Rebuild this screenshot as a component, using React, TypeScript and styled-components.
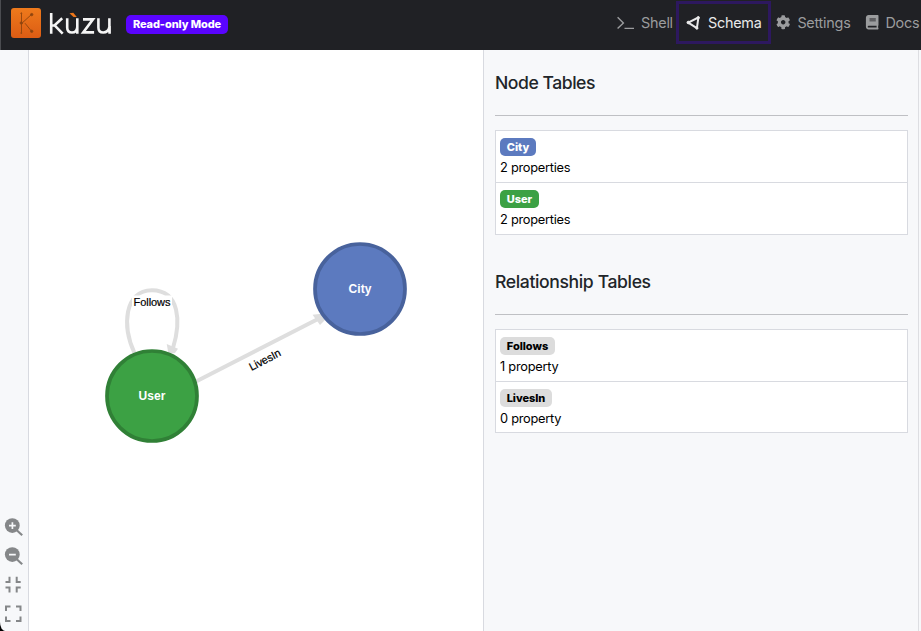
import React from "react";
import styled, { createGlobalStyle } from "styled-components";
import { FaBook, FaCog } from "react-icons/fa";

const GlobalStyle = createGlobalStyle`
  *, *::before, *::after { box-sizing: border-box; }
  body { margin: 0; font-family: Inter, "Liberation Sans", sans-serif; background: #000; overflow: hidden; }
`;

const Page = styled.div`
  display: grid;
  grid-template-rows: 50px 1fr;
  width: 921px;
  height: 631px;
  overflow: hidden;
  border-bottom-left-radius: 5px 9px;
  background: #f7f8fa;
`;

const NavBar = styled.header`
  display: flex;
  align-items: flex-start;
  background: #202125;
  border-left: 1px solid #4b4c50;
  padding-left: 10px;
`;

const Logo = styled.svg`
  display: block;
  width: 104px;
  height: 50px;
  flex: none;
`;

const ModeBadge = styled.span`
  width: 102px;
  height: 19px;
  margin: 15px 0 0 11px;
  border-radius: 5px;
  background: #5a04ff;
  color: #fff;
  font-size: 11px;
  font-weight: 800;
  line-height: 19px;
  letter-spacing: -0.1px;
  text-align: center;
  white-space: nowrap;
`;

const Nav = styled.nav`
  display: flex;
  height: 45px;
  margin-left: auto;
  white-space: nowrap;
`;

const NavItem = styled.a<{ $active?: boolean; $width: number; $gap: number; $inset: number }>`
  display: flex;
  align-items: center;
  flex: none;
  gap: ${(p) => p.$gap}px;
  width: ${(p) => p.$width}px;
  margin-top: 1px;
  height: 43px;
  padding: 0 0 0 ${(p) => p.$inset}px;
  border: ${(p) => (p.$active ? "3px solid #2d185f" : "0")};
  color: ${(p) => (p.$active ? "#e9e9ea" : "#9b9c9e")};
  font-size: 14.4px;
  letter-spacing: -0.25px;
  svg { flex: none; }
`;

const Workspace = styled.main`
  display: grid;
  grid-template-columns: 29px 454px 436px 2px;
  min-height: 0;
`;

const ToolRail = styled.aside`
  display: flex;
  flex-direction: column;
  justify-content: flex-end;
  gap: 9px;
  padding: 0 0 7px 3px;
  border-right: 1px solid #d8dae0;
`;

const ToolIcon = styled.svg`
  display: block;
  width: 20px;
  height: 20px;
`;

const Canvas = styled.svg`
  display: block;
  width: 454px;
  height: 581px;
  background: #fff;
  font-family: "Liberation Sans", Arial, sans-serif;
`;

const Sidebar = styled.aside`
  padding: 0 10px 0 11px;
  border-left: 1px solid #d8dae0;
  border-right: 1px solid #dddee2;
`;

const Section = styled.section`
  height: 199px;
`;

const SectionTitle = styled.h2<{ $tracking: number }>`
  height: 66px;
  margin: 0;
  padding-top: 22px;
  border-bottom: 1px solid #bfc0c4;
  color: #212529;
  font-size: 17.6px;
  font-weight: 500;
  line-height: 22px;
  letter-spacing: ${(p) => p.$tracking}px;
`;

const TableList = styled.ul`
  margin: 14px 0 0;
  padding: 0;
  list-style: none;
  border: 1px solid #d8dae0;
  background: #fff;
`;

const TableItem = styled.li`
  height: 51px;
  padding: 7px 4px 0;
  &:not(:last-child) { height: 52px; border-bottom: 1px solid #d8dae0; }
  ${Section}:last-child &:last-child { height: 50px; }
`;

const Tag = styled.span<{ $bg: string; $fg: string; $width: number }>`
  display: block;
  width: ${(p) => p.$width}px;
  height: 18px;
  border-radius: 5px;
  background: ${(p) => p.$bg};
  color: ${(p) => p.$fg};
  font-size: 11px;
  font-weight: 800;
  line-height: 18px;
  letter-spacing: -0.05px;
  text-align: center;
`;

const Count = styled.span`
  display: block;
  margin-top: 4px;
  color: #000;
  font-size: 12.8px;
  line-height: 16px;
  letter-spacing: -0.25px;
`;

const KuzuLogo = () => (
  <Logo viewBox="11 0 104 50">
    <defs>
      <linearGradient id="tile" x1="0" y1="0" x2="0" y2="1">
        <stop offset="0" stopColor="#ee7a1c" />
        <stop offset="1" stopColor="#dc5c14" />
      </linearGradient>
    </defs>
    <rect x="11" y="8" width="30" height="30" rx="3" fill="url(#tile)" />
    <g stroke="#97490f" strokeWidth="1" fill="#8b420f">
      <path d="M21.5 14v18.5M22.5 22.7l8.5-7.8M25 23.2l6.5 8" fill="none" />
      <circle cx="21.3" cy="13.3" r=".5" />
      <circle cx="21.3" cy="23" r="1.2" />
      <circle cx="21.3" cy="33" r=".5" />
      <circle cx="31.7" cy="14.6" r="1.2" />
      <circle cx="31.7" cy="31.3" r="1.2" />
    </g>
    <g fill="none" stroke="#f5f5f5" strokeWidth="2.6">
      <path d="M51.2 13v20.7M62.2 18.3l-7.6 7 8.1 8.4M55 25.5h-3.5" />
      <path d="M67.2 18.2v9.2q0 5.1 4.8 5.1t5.3-5.4v-8.9M77.3 26v7.7" />
      <path d="M83 19.4h10l-9.8 13h10.9" />
      <path d="M98.4 18.2v9.2q0 5.1 4.9 5.1t6.1-5.4v-8.9M109.6 26v7.7" />
    </g>
    <path d="M69.5 13.2l3.8-.5 3.5 4.2h-3.3z" fill="#ed7619" />
  </Logo>
);

const ShellIcon = () => (
  <svg width="17" height="16" viewBox="0 0 17 16" fill="none" stroke="currentColor" strokeWidth="1.4">
    <path d="M.6 2.2l5.8 5.7L.6 13.6M7.5 13.4H17" />
  </svg>
);

const SchemaIcon = () => (
  <svg width="15" height="16" viewBox="0 0 15 16" stroke="currentColor" fill="currentColor">
    <path d="M2.2 7.6L12.4 2.5 10.9 13.2z" fill="none" strokeWidth="2" strokeLinejoin="round" />
    <circle cx="2.3" cy="7.5" r="1.3" />
    <circle cx="12.3" cy="2.7" r="1.1" />
    <circle cx="10.9" cy="13.1" r="1.1" />
  </svg>
);

const ZoomIcon = ({ plus = false }: { plus?: boolean }) => (
  <ToolIcon viewBox="0 0 20 20">
    <circle cx="9.3" cy="8.6" r="7.4" fill="#858789" />
    <path d="M13.5 13l5.7 5.2" stroke="#858789" strokeWidth="2.2" />
    <path d={plus ? "M6 8.6h6.8M9.4 5.2V12" : "M6 8.6h6.8"} stroke="#f7f8fa" strokeWidth="1.7" />
  </ToolIcon>
);

const ScaleIcon = ({ d }: { d: string }) => (
  <ToolIcon viewBox="0 0 20 20" fill="none" stroke="#858789" strokeWidth="2">
    <path d={d} />
  </ToolIcon>
);

type TableInfo = { name: string; bg: string; fg: string; width: number; count: string };

const nodeTables: TableInfo[] = [
  { name: "City", bg: "#5c7abf", fg: "#fff", width: 36, count: "2 properties" },
  { name: "User", bg: "#3ca144", fg: "#fff", width: 39, count: "2 properties" },
];

const relTables: TableInfo[] = [
  { name: "Follows", bg: "#dcdcdc", fg: "#000", width: 55, count: "1 property" },
  { name: "LivesIn", bg: "#dcdcdc", fg: "#000", width: 52, count: "0 property" },
];

type SectionProps = { title: string; tracking: number; tables: TableInfo[] };

const TableSection = ({ title, tracking, tables }: SectionProps) => (
  <Section>
    <SectionTitle $tracking={tracking}>{title}</SectionTitle>
    <TableList>
      {tables.map((t) => (
        <TableItem key={t.name}>
          <Tag $bg={t.bg} $fg={t.fg} $width={t.width}>{t.name}</Tag>
          <Count>{t.count}</Count>
        </TableItem>
      ))}
    </TableList>
  </Section>
);

const SchemaGraph = () => (
  <Canvas viewBox="29 50 454 581">
    <g fill="none" stroke="#dedede" strokeWidth="4">
      <path d="M196 381.5L317 319.5" />
      <path d="M134.5 353C122 326 124 290.5 152 290.2C180 290.5 181 322 173 348" />
    </g>
    <path d="M312.5 314.7L321.5 313.8 325 320 320 325z" fill="#dedede" />
    <path d="M166.7 344L178 348.7 175 353 168.5 354z" fill="#dedede" />
    <rect x="132" y="295.5" width="40" height="14" fill="#fff" />
    <circle cx="360" cy="289" r="45" fill="#5c7abf" stroke="#48629c" strokeWidth="3.7" />
    <circle cx="152" cy="396" r="45" fill="#3ca144" stroke="#308036" strokeWidth="3.7" />
    <g textAnchor="middle" fontSize="12">
      <text x="360" y="293" fill="#fff" fontWeight="700" textLength="23">City</text>
      <text x="152" y="400" fill="#fff" fontWeight="700" textLength="27">User</text>
      <g fontSize="11" fill="#000" stroke="#000" strokeWidth=".2">
        <text x="152" y="306.3" textLength="37">Follows</text>
        <text x="265" y="363.5" textLength="34" transform="rotate(-27.5 265 360)">LivesIn</text>
      </g>
    </g>
  </Canvas>
);

export default function App() {
  return (
    <>
      <GlobalStyle />
      <Page>
        <NavBar>
          <KuzuLogo />
          <ModeBadge>Read-only Mode</ModeBadge>
          <Nav>
            <NavItem $width={66} $gap={7} $inset={7}><ShellIcon />Shell</NavItem>
            <NavItem $width={95} $gap={7} $inset={7} $active><SchemaIcon />Schema</NavItem>
            <NavItem $width={88} $gap={7} $inset={5}><FaCog size={14.4} />Settings</NavItem>
            <NavItem $width={62} $gap={6} $inset={6}><FaBook size={14.4} />Docs</NavItem>
          </Nav>
        </NavBar>
        <Workspace>
          <ToolRail>
            <ZoomIcon plus />
            <ZoomIcon />
            <ScaleIcon d="M2.5 7h4V1.8M17.7 7h-4V1.8M2.5 12.5h4v5M17.7 12.5h-4v5" />
            <ScaleIcon d="M3 7V2.5h4.5M13 2.5h4.5V7M3 12.5V17h4.5M13 17h4.5v-4.5" />
          </ToolRail>
          <SchemaGraph />
          <Sidebar>
            <TableSection title="Node Tables" tracking={-0.47} tables={nodeTables} />
            <TableSection title="Relationship Tables" tracking={-0.38} tables={relTables} />
          </Sidebar>
        </Workspace>
      </Page>
    </>
  );
}
